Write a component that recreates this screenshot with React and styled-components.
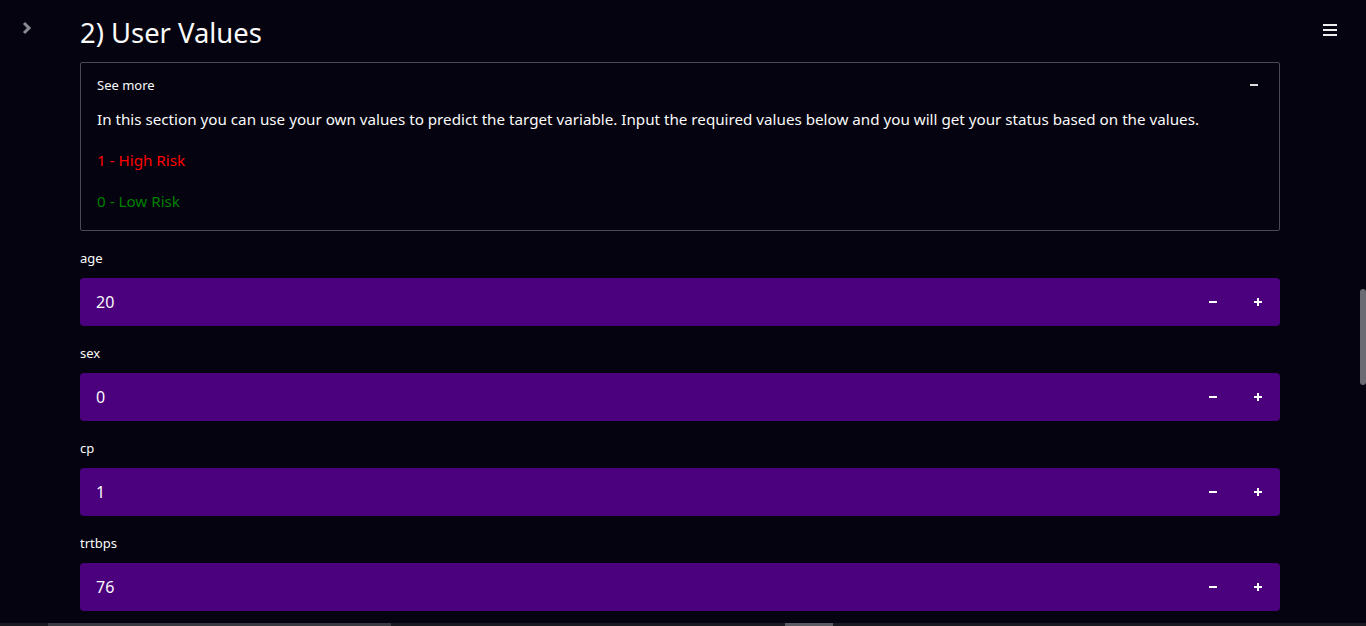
import React from "react";
import styled, { createGlobalStyle } from "styled-components";

const GlobalStyle = createGlobalStyle`
  html, body {
    margin: 0;
    padding: 0;
    background: #04030f;
    overflow: hidden;
  }
  body {
    font-family: "Noto Sans", "Open Sans", sans-serif;
    color: #fafafa;
  }
`;

const Page = styled.div`
  height: 626px;
  display: flex;
  flex-direction: column;
  background: #04030f;
`;

const Main = styled.div`
  flex: 1;
  display: flex;
  overflow: hidden;
`;

const LeftGutter = styled.div`
  width: 80px;
  flex-shrink: 0;
  padding: 18px 0 0 21px;
  box-sizing: border-box;
`;

const Content = styled.div`
  width: 1200px;
  flex-shrink: 0;
  padding-top: 16px;
`;

const RightGutter = styled.div`
  flex: 1;
  display: flex;
  justify-content: space-between;
`;

const MenuButton = styled.div`
  margin: 19px 0 0 43px;
`;

const ScrollTrack = styled.div`
  width: 6px;
  padding-top: 289px;
`;

const ScrollThumb = styled.div`
  width: 6px;
  height: 96px;
  border-radius: 3px;
  background: #6b6b73;
`;

const Heading = styled.h2`
  margin: 0 0 12px;
  font-size: 27.4px;
  font-weight: 400;
  line-height: 34px;
  color: #fafafa;
`;

const Expander = styled.div`
  border: 1px solid #4a4a55;
  border-radius: 2px;
`;

const ExpanderHeader = styled.div`
  height: 43px;
  margin-bottom: 1px;
  display: flex;
  align-items: center;
  justify-content: space-between;
  padding: 0 21px 0 16px;
  font-size: 13px;
`;

const ExpanderBody = styled.div`
  padding: 0 16px 17px;
`;

const Para = styled.p`
  margin: 0;
  font-size: 15.2px;
  line-height: 24px;
  color: ${(p) => p.$color || "#fafafa"};
  & + & {
    margin-top: 17px;
  }
`;

const Field = styled.div`
  margin-top: 19px;
`;

const Label = styled.div`
  font-size: 13px;
  line-height: 16px;
  margin-bottom: 12px;
  color: #fafafa;
`;

const NumberBox = styled.div`
  height: 48px;
  display: flex;
  align-items: center;
  background: #4b007d;
  border-radius: 4px;
`;

const Value = styled.div`
  flex: 1;
  padding-left: 16px;
  font-size: 16px;
`;

const StepButton = styled.div`
  width: 45px;
  height: 100%;
  display: flex;
  align-items: center;
  justify-content: center;
`;

const BottomBar = styled.div`
  height: 3px;
  display: flex;
  background: #1a1a22;
`;

const BottomSeg = styled.div`
  margin-left: ${(p) => p.$left}px;
  width: ${(p) => p.$width}px;
  background: ${(p) => p.$color};
`;

const Minus = () => (
  <svg width="10" height="10" viewBox="0 0 10 10">
    <line x1="1" y1="5" x2="9" y2="5" stroke="#fff" strokeWidth="2" />
  </svg>
);

const Plus = () => (
  <svg width="10" height="10" viewBox="0 0 10 10">
    <line x1="1" y1="5" x2="9" y2="5" stroke="#fff" strokeWidth="2" />
    <line x1="5" y1="1" x2="5" y2="9" stroke="#fff" strokeWidth="2" />
  </svg>
);

const fields = [
  { label: "age", value: 20 },
  { label: "sex", value: 0 },
  { label: "cp", value: 1 },
  { label: "trtbps", value: 76 },
];

const App = () => {
  return (
    <Page>
      <GlobalStyle />
      <Main>
        <LeftGutter>
          <svg width="12" height="14" viewBox="0 0 12 14">
            <path d="M3 2 L8 7 L3 12" fill="none" stroke="#8a8a92" strokeWidth="3" />
          </svg>
        </LeftGutter>
        <Content>
          <Heading>2) User Values</Heading>
          <Expander>
            <ExpanderHeader>
              <span>See more</span>
              <svg width="8" height="4" viewBox="0 0 8 4">
                <line x1="0" y1="2" x2="8" y2="2" stroke="#ddd" strokeWidth="2" />
              </svg>
            </ExpanderHeader>
            <ExpanderBody>
              <Para>
                In this section you can use your own values to predict the target variable. Input the required values below and you will get your status based on the values.
              </Para>
              <Para $color="#ff0000">1 - High Risk</Para>
              <Para $color="#008000">0 - Low Risk</Para>
            </ExpanderBody>
          </Expander>
          {fields.map((f) => (
            <Field key={f.label}>
              <Label>{f.label}</Label>
              <NumberBox>
                <Value>{f.value}</Value>
                <StepButton>
                  <Minus />
                </StepButton>
                <StepButton>
                  <Plus />
                </StepButton>
              </NumberBox>
            </Field>
          ))}
        </Content>
        <RightGutter>
          <MenuButton>
            <svg width="14" height="13" viewBox="0 0 14 13">
              <rect x="0" y="1" width="14" height="2" fill="#eee" />
              <rect x="0" y="6" width="14" height="2" fill="#eee" />
              <rect x="0" y="11" width="14" height="2" fill="#eee" />
            </svg>
          </MenuButton>
          <ScrollTrack>
            <ScrollThumb />
          </ScrollTrack>
        </RightGutter>
      </Main>
      <BottomBar>
        <BottomSeg $left={48} $width={343} $color="#3a3a42" />
        <BottomSeg $left={394} $width={48} $color="#5a5a62" />
      </BottomBar>
    </Page>
  );
};

export default App;
